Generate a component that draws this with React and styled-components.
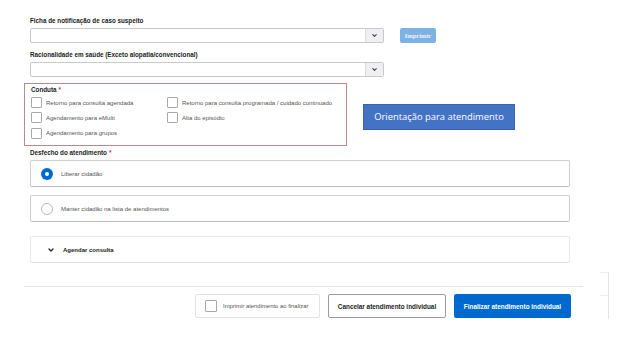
import styled, { createGlobalStyle, css } from 'styled-components';

const GlobalStyle = createGlobalStyle`
  html, body {
    margin: 0;
    padding: 0;
    background: #ffffff;
  }
  body {
    font-family: 'Liberation Sans', Arial, sans-serif;
    color: #1f1f1f;
  }
  * {
    box-sizing: border-box;
  }
`;

const Page = styled.div`
  position: relative;
  width: 628px;
  height: 337px;
  padding: 17px 0 0 30px;
  overflow: hidden;
`;

const Label = styled.div`
  font-size: 6.3px;
  font-weight: 700;
  color: #222;
  line-height: 8px;
  margin-bottom: 3px;
`;

const Req = styled.span`
  color: #d4343a;
  margin-left: 2px;
`;

const FieldRow = styled.div`
  display: flex;
  align-items: center;
  gap: 16px;
  margin-bottom: 8px;
`;

const Select = styled.div`
  width: 354px;
  height: 15px;
  border: 1px solid #c9c9cc;
  border-radius: 2px;
  display: flex;
  justify-content: flex-end;
  background: #fff;
`;

const Caret = styled.div`
  width: 18px;
  height: 100%;
  background: #efeff3;
  border-left: 1px solid #dcdce0;
  display: flex;
  align-items: center;
  justify-content: center;
  color: #444;
`;

const PrintButton = styled.button`
  width: 36px;
  height: 15px;
  border: none;
  border-radius: 2px;
  background: #7fb2e4;
  color: #eaf3fc;
  font-family: 'Liberation Serif', serif;
  font-weight: 700;
  font-size: 6.5px;
  padding: 0;
`;

const ConductRow = styled.div`
  display: flex;
  align-items: center;
  gap: 16px;
  margin-left: -6px;
  margin-top: -2px;
`;

const ConductBox = styled.div`
  width: 323px;
  height: 63px;
  border: 1px solid #b88a90;
  padding: 2px 0 0 6px;
`;

const CheckGrid = styled.div`
  display: grid;
  grid-template-columns: 136px 1fr;
  row-gap: 4.3px;
  margin-top: 3px;
`;

const CheckItem = styled.div`
  display: flex;
  align-items: center;
  gap: 4px;
  font-size: 6px;
  color: #555;
  white-space: nowrap;
`;

const Box = styled.span`
  width: 11px;
  height: 11px;
  border: 1px solid #a9a9ad;
  border-radius: 1px;
  background: #fff;
  flex-shrink: 0;
  ${p => p.$big && css`
    width: 12px;
    height: 12px;
  `}
`;

const Orientation = styled.div`
  width: 152px;
  height: 26px;
  margin-top: 4px;
  background: #4472c4;
  border: 1px solid #3a63ab;
  color: #fff;
  font-family: 'Open Sans', 'Noto Sans', sans-serif;
  font-size: 9.4px;
  display: flex;
  align-items: center;
  justify-content: center;
`;

const Section = styled.div`
  margin-top: 3px;
  width: 540px;
`;

const Card = styled.div`
  height: 27px;
  border: 1px solid ${p => (p.$light ? '#e8e8ea' : '#cfcfd3')};
  border-bottom-color: ${p => (p.$light ? '#e2e2e4' : '#bdbdc1')};
  border-radius: 2px;
  display: flex;
  align-items: center;
  padding-left: ${p => (p.$light ? '16px' : '10px')};
  gap: 8px;
  margin-bottom: ${p => p.$gap || 0}px;
  font-size: 6px;
  color: #555;
  ${p => p.$light && css`
    font-weight: 700;
    color: #222;
  `}
`;

const Radio = styled.span`
  width: 12px;
  height: 12px;
  border-radius: 50%;
  flex-shrink: 0;
  ${p => p.$on ? css`
    background: #0069d0;
    display: flex;
    align-items: center;
    justify-content: center;
    &::after {
      content: '';
      width: 4px;
      height: 4px;
      border-radius: 50%;
      background: #fff;
    }
  ` : css`
    border: 1px solid #b8b8bc;
    background: #fff;
  `}
`;

const Divider = styled.div`
  width: 559px;
  height: 1px;
  background: #e6e6e8;
  margin: 23px 0 0 -6px;
`;

const Footer = styled.div`
  width: 541px;
  display: flex;
  justify-content: flex-end;
  gap: 8px;
  margin-top: 7px;
`;

const FooterButton = styled.div`
  height: 24px;
  border-radius: 2px;
  display: flex;
  align-items: center;
  font-size: 6.4px;
  font-weight: 700;
  white-space: nowrap;
  ${p => p.$kind === 'check' && css`
    width: 125px;
    border: 1px solid #e3e3e6;
    padding-left: 9px;
    gap: 6px;
    font-weight: 400;
    font-size: 5.9px;
    color: #555;
  `}
  ${p => p.$kind === 'outline' && css`
    width: 118px;
    border: 1px solid #9c9ca0;
    justify-content: center;
    color: #222;
  `}
  ${p => p.$kind === 'primary' && css`
    width: 117px;
    background: #0069d0;
    justify-content: center;
    color: #fff;
  `}
`;

const EdgeFragment = styled.div`
  position: absolute;
  left: 584px;
  top: 272px;
  width: 25px;
  height: 47px;
  border-right: 1px solid #e4e4e6;
  &::before,
  &::after {
    content: '';
    position: absolute;
    right: 0;
    width: 8px;
    height: 1px;
    background: #ececee;
  }
  &::before { top: 0; }
  &::after { top: 23px; }
`;

function Chevron({ size = 7 }) {
  return (
    <svg width={size} height={size} viewBox="0 0 10 10" fill="none" stroke="currentColor" strokeWidth="1.6" strokeLinecap="round" strokeLinejoin="round">
      <path d="M2.5 3.8 L5 6.3 L7.5 3.8" />
    </svg>
  );
}

const conduct = [
  'Retorno para consulta agendada',
  'Retorno para consulta programada / cuidado continuado',
  'Agendamento para eMulti',
  'Alta do episódio',
  'Agendamento para grupos',
];

export default function App() {
  return (
    <>
      <GlobalStyle />
      <Page>
        <Label>Ficha de notificação de caso suspeito</Label>
        <FieldRow>
          <Select>
            <Caret><Chevron /></Caret>
          </Select>
          <PrintButton>Imprimir</PrintButton>
        </FieldRow>

        <Label>Racionalidade em saúde (Exceto alopatia/convencional)</Label>
        <FieldRow>
          <Select>
            <Caret><Chevron /></Caret>
          </Select>
        </FieldRow>

        <ConductRow>
          <ConductBox>
            <Label>Conduta<Req>*</Req></Label>
            <CheckGrid>
              {conduct.map(text => (
                <CheckItem key={text}>
                  <Box />
                  {text}
                </CheckItem>
              ))}
            </CheckGrid>
          </ConductBox>
          <Orientation>Orientação para atendimento</Orientation>
        </ConductRow>

        <Section>
          <Label>Desfecho do atendimento<Req>*</Req></Label>
          <Card $gap={8}>
            <Radio $on />
            Liberar cidadão
          </Card>
          <Card $gap={14}>
            <Radio />
            Manter cidadão na lista de atendimentos
          </Card>
          <Card $light>
            <Chevron size={8} />
            Agendar consulta
          </Card>
        </Section>

        <Divider />
        <Footer>
          <FooterButton $kind="check">
            <Box $big />
            Imprimir atendimento ao finalizar
          </FooterButton>
          <FooterButton $kind="outline">Cancelar atendimento individual</FooterButton>
          <FooterButton $kind="primary">Finalizar atendimento individual</FooterButton>
        </Footer>
        <EdgeFragment />
      </Page>
    </>
  );
}
